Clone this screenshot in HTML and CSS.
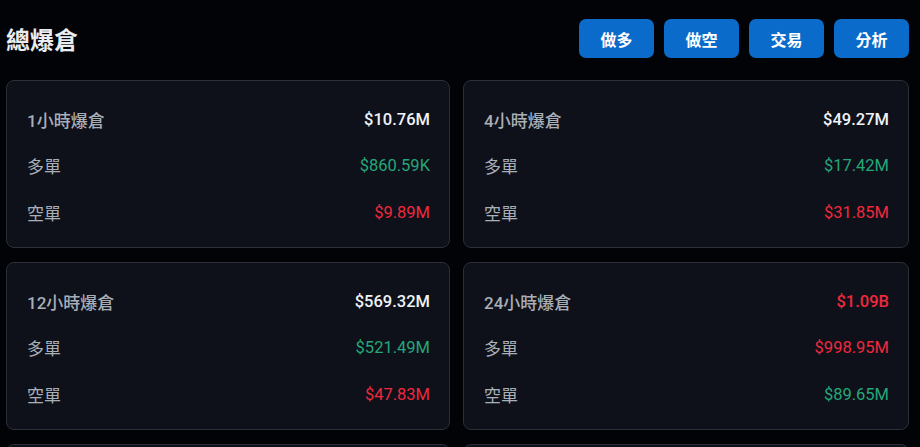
FILE: index.html
```html
<!DOCTYPE html>
<html lang="zh-Hant">
<head>
<meta charset="utf-8">
<title>總爆倉</title>
<link rel="stylesheet" href="styles.css">
</head>
<body>
<div class="page">
  <header class="header">
    <h1 class="title">總爆倉</h1>
    <div class="actions">
      <button class="btn">做多</button>
      <button class="btn">做空</button>
      <button class="btn">交易</button>
      <button class="btn">分析</button>
    </div>
  </header>
  <section class="grid">
    <div class="card">
      <div class="row head"><span class="label">1小時爆倉</span><span class="value">$10.76M</span></div>
      <div class="row"><span class="label">多單</span><span class="value up">$860.59K</span></div>
      <div class="row"><span class="label">空單</span><span class="value down">$9.89M</span></div>
    </div>
    <div class="card">
      <div class="row head"><span class="label">4小時爆倉</span><span class="value">$49.27M</span></div>
      <div class="row"><span class="label">多單</span><span class="value up">$17.42M</span></div>
      <div class="row"><span class="label">空單</span><span class="value down">$31.85M</span></div>
    </div>
    <div class="card">
      <div class="row head"><span class="label">12小時爆倉</span><span class="value">$569.32M</span></div>
      <div class="row"><span class="label">多單</span><span class="value up">$521.49M</span></div>
      <div class="row"><span class="label">空單</span><span class="value down">$47.83M</span></div>
    </div>
    <div class="card">
      <div class="row head"><span class="label">24小時爆倉</span><span class="value down">$1.09B</span></div>
      <div class="row"><span class="label">多單</span><span class="value down">$998.95M</span></div>
      <div class="row"><span class="label">空單</span><span class="value up">$89.65M</span></div>
    </div>
    <div class="card"></div>
    <div class="card"></div>
  </section>
</div>
</body>
</html>
```

FILE: styles.css
```css
* { box-sizing: border-box; }
html, body {
  margin: 0;
  padding: 0;
  background: #020307;
  overflow: hidden;
}
body {
  font-family: Roboto, "Noto Sans CJK TC", sans-serif;
  color: #eaecef;
  width: 920px;
  height: 447px;
}
.page {
  padding: 19px 11px 0 6px;
}
.header {
  display: flex;
  align-items: center;
  justify-content: space-between;
  height: 39px;
  margin-bottom: 22px;
}
.title {
  margin: 0;
  font-size: 24px;
  font-weight: 700;
  color: #eaecef;
}
.actions {
  display: flex;
  gap: 10px;
}
.btn {
  width: 75px;
  height: 39px;
  border: none;
  border-radius: 7px;
  background: #0b6bcb;
  color: #ffffff;
  font-family: "Noto Sans CJK TC", sans-serif;
  font-size: 16px;
  font-weight: 700;
  padding: 0;
}
.grid {
  display: grid;
  grid-template-columns: 444px 446px;
  column-gap: 13px;
  row-gap: 14px;
}
.card {
  height: 168px;
  background: #0e1119;
  border: 1px solid #2b2f37;
  border-radius: 8px;
  padding: 23px 19px 18px 20px;
  display: flex;
  flex-direction: column;
  gap: 16.5px;
}
.row {
  height: 30px;
  display: flex;
  align-items: center;
  justify-content: space-between;
}
.label {
  color: #a9afb8;
  font-size: 17px;
}
.head .label {
  font-weight: 500;
}
.value {
  color: #eaecef;
  font-size: 16.5px;
}
.head .value {
  font-weight: 500;
  color: #f0f3f8;
}
.value.up { color: #25a77a; }
.value.down { color: #f0283e; }
```
